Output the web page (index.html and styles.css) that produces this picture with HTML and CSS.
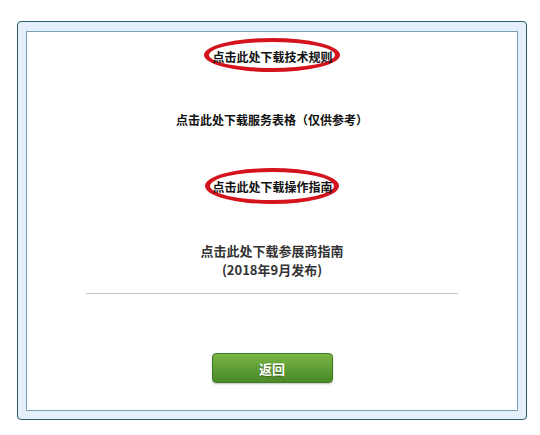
FILE: index.html
```html
<!DOCTYPE html>
<html lang="zh-CN">
<head>
<meta charset="utf-8">
<title>下载</title>
<link rel="stylesheet" href="styles.css">
</head>
<body>
<div class="frame">
  <div class="panel">
    <div class="row row-first">
      <span class="oval oval-a"><span class="link">点击此处下载技术规则</span></span>
    </div>
    <div class="row row-plain">
      <span class="link">点击此处下载服务表格（仅供参考）</span>
    </div>
    <div class="row row-oval">
      <span class="oval oval-b"><span class="link">点击此处下载操作指南</span></span>
    </div>
    <div class="row row-guide">
      <span class="guide">点击此处下载参展商指南<br>(2018年9月发布)</span>
    </div>
    <div class="rule"></div>
    <div class="row row-btn">
      <button class="back">返回</button>
    </div>
  </div>
</div>
</body>
</html>
```
FILE: styles.css
```css
* { box-sizing: border-box; }
html, body {
  margin: 0;
  padding: 0;
  background: #ffffff;
}
body {
  width: 540px;
  height: 435px;
  overflow: hidden;
  font-family: "Noto Sans CJK SC", "Liberation Sans", sans-serif;
}
.frame {
  margin: 21px 0 0 17px;
  width: 510px;
  height: 399px;
  border: 1px solid #2d5b6b;
  border-radius: 4px;
  background: #e3effb;
  padding: 9px 8px 8px 8px;
}
.panel {
  height: 100%;
  border: 1px solid #7d9db2;
  background: #ffffff;
  display: flex;
  flex-direction: column;
  align-items: center;
}
.row {
  display: flex;
  justify-content: center;
  width: 100%;
}
.link {
  font-size: 12px;
  font-weight: 700;
  line-height: 16px;
  color: #111111;
  white-space: nowrap;
}
.oval {
  display: flex;
  align-items: center;
  justify-content: center;
  border: 4px solid #d5131c;
  border-left-width: 5px;
  border-right-width: 5px;
  border-radius: 50%;
}
.oval-a {
  width: 136px;
  height: 34px;
  padding-top: 3px;
  padding-left: 1px;
}
.row-first { margin-top: 6px; }
.row-plain { margin-top: 40px; }
.row-oval { margin-top: 40px; }
.oval-b {
  width: 134px;
  height: 36px;
  padding-top: 2px;
  padding-left: 1px;
}
.row-guide { margin-top: 37px; }
.guide {
  font-size: 13px;
  font-weight: 700;
  line-height: 19px;
  color: #333333;
  text-align: center;
}
.rule {
  margin-top: 14px;
  width: 372px;
  height: 1px;
  background: #c4c4c4;
}
.row-btn { margin-top: 59px; }
.back {
  width: 121px;
  height: 30px;
  border: 1px solid #3f7a24;
  border-radius: 4px;
  background: linear-gradient(#7ab544, #5d9c33 55%, #4a8a28);
  color: #ffffff;
  font-family: "Noto Sans CJK SC", "Liberation Sans", sans-serif;
  font-size: 13px;
  font-weight: 700;
  text-shadow: 0 1px 1px rgba(0,0,0,0.35);
  box-shadow: 0 1px 2px rgba(0,0,0,0.25);
  padding: 0;
  cursor: pointer;
}
```
